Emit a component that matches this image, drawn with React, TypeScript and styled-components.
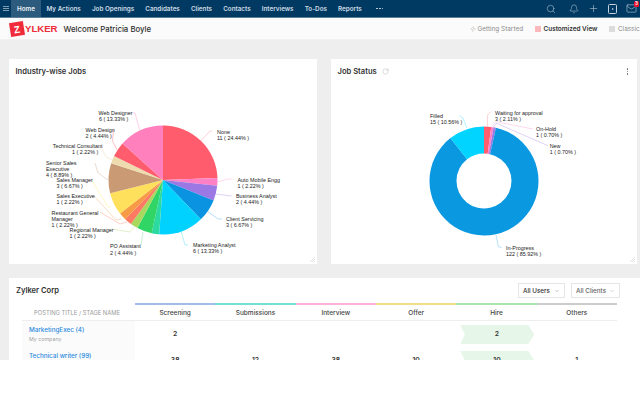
import React from "react";
import styled, { createGlobalStyle } from "styled-components";
import { Search, Bell, Plus, Mail, RotateCw, Zap, ChevronDown } from "lucide-react";

const Global = createGlobalStyle`
  html, body { margin: 0; padding: 0; background: #fff; }
  body { font-family: "Inter", "Liberation Sans", sans-serif; color: #333; }
`;

const Page = styled.div`
  width: 640px; height: 360px; overflow: hidden; background: #eeeeee;
  display: flex; flex-direction: column;
`;
const Nav = styled.nav`
  height: 18px; flex: none; background: #003a62; display: flex; align-items: stretch;
  border-bottom: 0.5px solid #5d7f98; box-sizing: border-box;
`;
const Burger = styled.div`
  width: 11px; flex: none; display: flex; flex-direction: column; justify-content: center; align-items: center; gap: 1.2px;
  & > i { display: block; width: 6px; height: 1px; background: #7f9db3; }
`;
const NavItem = styled.div<{ $active?: boolean }>`
  display: flex; align-items: center; padding: 0 ${p => (p.$active ? "6px" : "5.55px")};
  font-size: 6.3px; font-weight: 600; color: ${p => (p.$active ? "#eef3f6" : "#cfdbe4")};
  background: ${p => (p.$active ? "#2c5b7d" : "transparent")}; white-space: nowrap;
`;
const NavDots = styled.div`
  margin-left: 9px; display: flex; align-items: center; gap: 1px;
  & > i { display: block; width: 1.6px; height: 1.6px; border-radius: 50%; background: #cfdbe4; }
`;
const NavIcons = styled.div`
  margin-left: auto; display: flex; align-items: center; color: #c3d2dd; gap: 9px; padding-right: 3px;
  & > :first-child { margin-right: 4px; }
`;
const IconWrap = styled.span`
  position: relative; display: flex; align-items: center;
`;
const Badge = styled.span`
  position: absolute; top: -2.5px; right: -2px; width: 5px; height: 6px; border-radius: 1.5px; background: #e8112d; color: #fff;
  font-size: 4.5px; font-weight: 700; line-height: 6px; text-align: center;
`;
const PlayBox = styled.span`
  width: 9px; height: 10px; box-sizing: border-box; border: 1px solid #c3d2dd; border-radius: 1.5px; display: flex; align-items: center; justify-content: center;
  &::after { content: ""; border-left: 2px solid #c3d2dd; border-top: 1.5px solid transparent; border-bottom: 1.5px solid transparent; }
`;

const SubBar = styled.div`
  height: 22px; flex: none; background: #fbfbfb; display: flex; align-items: center; padding-left: 10px;
  border-bottom: 0.5px solid #f2f2f2; box-sizing: border-box; position: relative; white-space: nowrap;
`;
const LogoMark = styled.span`
  width: 14px; height: 14px; background: #f02b3a; color: #fff; font-family: "Liberation Sans", sans-serif; font-weight: 700; font-size: 10px;
  display: flex; align-items: center; justify-content: center; transform: rotate(-9deg); flex: none;
`;
const LogoText = styled.span`
  margin-left: 1px; color: #ee2b38; font-family: "Liberation Sans", sans-serif; font-weight: 700; font-size: 9.6px;
`;
const Welcome = styled.span`
  margin-left: 6px; font-size: 7.8px; font-weight: 500; color: #2f2f2f;
`;
const Views = styled.div`
  margin-left: auto; display: flex; align-items: center; font-size: 6.4px; width: 170px; flex: none; overflow: hidden;
  & > svg { flex: none; margin-right: -1px; }
`;
const ViewLabel = styled.span<{ $strong?: boolean }>`
  color: ${p => (p.$strong ? "#333" : "#8d8d8d")}; font-weight: ${p => (p.$strong ? 600 : 400)};
  margin-right: 12px; margin-left: 2.5px; flex: none;
`;
const Swatch = styled.span<{ $c: string }>`
  width: 6px; height: 6px; background: ${p => p.$c}; flex: none;
`;

const Charts = styled.div`
  display: flex; gap: 14px; padding: 19px 0 0 9px; height: 224px; box-sizing: border-box; flex: none; width: 640px;
`;
const Card = styled.section<{ $w: number }>`
  width: ${p => p.$w}px; height: 205px; background: #fff; position: relative; display: flex; flex-direction: column; flex: none;
`;
const CardHead = styled.header`
  height: 22px; flex: none; display: flex; align-items: center; padding: 3px 7px 0 6.5px; box-sizing: border-box;
  font-size: 7.6px; font-weight: 600; color: #333; gap: 5px;
`;
const Kebab = styled.div`
  margin-left: auto; margin-right: 2px; display: flex; flex-direction: column; gap: 1px;
  & > i { display: block; width: 1.5px; height: 1.5px; background: #666; border-radius: 50%; }
`;
const ChartSvg = styled.svg`
  display: block; flex: none;
  & text { font-family: "Liberation Sans", sans-serif; font-size: 5.4px; fill: #222; }
`;
const Grip = styled.svg`
  position: absolute; right: 1px; bottom: 1px;
`;

const Bottom = styled.section`
  margin: 14px 0 0 9px; background: #fff; flex: 1; position: relative; padding: 0 0 0 7px; min-height: 0;
`;
const BottomHead = styled.header`
  display: flex; align-items: center; height: 25px; padding-right: 20px;
`;
const BottomTitle = styled.h2`
  margin: 0; font-size: 7.6px; font-weight: 600; color: #333;
`;
const Filter = styled.div<{ $w: number; $muted?: boolean }>`
  width: ${p => p.$w}px; height: 15px; box-sizing: border-box; border: 1px solid #e6e6e6; display: flex; align-items: center; justify-content: space-between;
  padding: 0 4px; font-size: 6.3px; font-weight: 500; color: ${p => (p.$muted ? "#666" : "#333")}; margin-left: 6px; white-space: nowrap;
  &:first-of-type { margin-left: auto; }
`;
const Table = styled.div`
  display: grid; grid-template-columns: 113px repeat(6, 80.34px); margin-left: 6px; width: 595px;
`;
const HeadLeft = styled.div`
  height: 18px; box-sizing: border-box; display: flex; align-items: center; justify-content: center; padding-right: 3px; border-bottom: 1px solid #eeeeee;
  font-size: 5.8px; color: #9a9a9a; border-top: 2px solid transparent; white-space: nowrap;
`;
const HeadCell = styled.div<{ $c: string }>`
  height: 18px; box-sizing: border-box; display: flex; align-items: center; justify-content: center; border-top: 2px solid ${p => p.$c}; border-bottom: 1px solid #eeeeee;
  font-size: 6.5px; font-weight: 500; color: #444;
`;
const RowLeft = styled.div`
  background: #fbfbfb; height: 26px; padding: 5px 0 0 7px; box-sizing: border-box; white-space: nowrap;
`;
const JobLink = styled.div`
  font-size: 6.3px; font-weight: 500; color: #2b8ae0; line-height: 9px;
`;
const Company = styled.div`
  font-size: 5.3px; color: #a2a2a2; line-height: 8px;
`;
const Cell = styled.div`
  height: 26px; display: flex; align-items: flex-start; justify-content: center; padding-top: 4px; box-sizing: border-box;
  font-size: 6.8px; font-weight: 600; color: #333; line-height: 18px;
`;
const HireCell = styled(Cell)`
  position: relative; padding-left: 1px;
  &::before {
    content: ""; position: absolute; left: 4px; top: 4px; width: 74px; height: 19px; background: #e6f7e9;
    clip-path: polygon(0 0, 92% 0, 100% 50%, 92% 100%, 0 100%, 6% 50%);
  }
  & > span { position: relative; }
`;

type Slice = { v: number; c: string };
function polar(cx: number, cy: number, r: number, a: number): [number, number] {
  const t = (a - 90) * Math.PI / 180;
  return [cx + r * Math.cos(t), cy + r * Math.sin(t)];
}
function arcPath(cx: number, cy: number, R: number, r: number, a0: number, a1: number) {
  const large = a1 - a0 > 180 ? 1 : 0;
  const [x0, y0] = polar(cx, cy, R, a0);
  const [x1, y1] = polar(cx, cy, R, a1);
  if (r === 0) return `M${cx} ${cy}L${x0} ${y0}A${R} ${R} 0 ${large} 1 ${x1} ${y1}Z`;
  const [x2, y2] = polar(cx, cy, r, a1);
  const [x3, y3] = polar(cx, cy, r, a0);
  return `M${x0} ${y0}A${R} ${R} 0 ${large} 1 ${x1} ${y1}L${x2} ${y2}A${r} ${r} 0 ${large} 0 ${x3} ${y3}Z`;
}
const Slices = ({ data, cx, cy, R, r }: { data: Slice[]; cx: number; cy: number; R: number; r: number }) => {
  const total = data.reduce((s, d) => s + d.v, 0);
  let a = 0;
  return (
    <>
      {data.map((d, i) => {
        const a0 = a;
        a += (d.v / total) * 360;
        return <path key={i} d={arcPath(cx, cy, R, r, a0, a)} fill={d.c} />;
      })}
    </>
  );
};
type Label = { x: number; y: number; t: string };
const Labels = ({ items }: { items: Label[] }) => (
  <>{items.map((l, i) => <text key={i} x={l.x} y={l.y}>{l.t}</text>)}</>
);
type Lead = { d: string; c: string };
const Leads = ({ items }: { items: Lead[] }) => (
  <>{items.map((l, i) => <path key={i} d={l.d} stroke={l.c} strokeWidth={0.6} fill="none" />)}</>
);

const pie: Slice[] = [
  { v: 11, c: "#ff5c6e" }, { v: 1, c: "#ff80c4" }, { v: 2, c: "#9b78e4" }, { v: 3, c: "#0a93e0" },
  { v: 6, c: "#00d2ff" }, { v: 1, c: "#2cd9a0" }, { v: 2, c: "#30d565" }, { v: 1, c: "#a8d85e" },
  { v: 1, c: "#ff7a62" }, { v: 1, c: "#f79a45" }, { v: 3, c: "#ffe05c" }, { v: 4, c: "#c99a74" },
  { v: 1, c: "#eedcae" }, { v: 2, c: "#ff5c6e" }, { v: 6, c: "#ff80bd" },
];
const pieLabels: Label[] = [
  { x: 98.5, y: 115, t: "Web Designer" }, { x: 99, y: 121, t: "6 ( 13.33% )" },
  { x: 85.5, y: 131.7, t: "Web Design" }, { x: 85.5, y: 137.7, t: "2 ( 4.44% )" },
  { x: 52.7, y: 148.3, t: "Technical Consultant" }, { x: 72, y: 154.3, t: "1 ( 2.22% )" },
  { x: 46, y: 165, t: "Senior Sales" }, { x: 46, y: 171, t: "Executive" }, { x: 46, y: 177, t: "4 ( 8.89% )" },
  { x: 56.5, y: 181.7, t: "Sales Manager" }, { x: 56.5, y: 187.7, t: "3 ( 6.67% )" },
  { x: 56.5, y: 198.3, t: "Sales Executive" }, { x: 56.5, y: 204.3, t: "1 ( 2.22% )" },
  { x: 51.5, y: 215, t: "Restaurant General" }, { x: 51.5, y: 221, t: "Manager" }, { x: 51.5, y: 227, t: "1 ( 2.22% )" },
  { x: 69.5, y: 231.7, t: "Regional Manager" }, { x: 69.5, y: 237.7, t: "1 ( 2.22% )" },
  { x: 110, y: 248.3, t: "PO Assistant" }, { x: 110, y: 254.5, t: "2 ( 4.44% )" },
  { x: 217, y: 134, t: "None" }, { x: 217, y: 140, t: "11 ( 24.44% )" },
  { x: 237.5, y: 181.7, t: "Auto Mobile Engg" }, { x: 237.5, y: 187.7, t: "1 ( 2.22% )" },
  { x: 236, y: 198.3, t: "Business Analyst" }, { x: 236, y: 204.3, t: "2 ( 4.44% )" },
  { x: 226, y: 221, t: "Client Servicing" }, { x: 226, y: 227, t: "3 ( 6.67% )" },
  { x: 193, y: 246.7, t: "Marketing Analyst" }, { x: 193, y: 252.7, t: "6 ( 13.33% )" },
];
const pieLeads: Lead[] = [
  { d: "M133 113L135 113L140 131", c: "#ffb3d9" },
  { d: "M113.5 129L112.5 141L117 150", c: "#ff9aa5" },
  { d: "M101 147L106 157L112.7 160", c: "#f0e3c4" },
  { d: "M95 163L98 173L108 180", c: "#e0c4ae" },
  { d: "M91.7 180L107.7 206.7L111 206.7", c: "#fff0a0" },
  { d: "M94 196L116 220L122 219", c: "#fbc594" },
  { d: "M100 212L120 224L127 222", c: "#ffb0a0" },
  { d: "M111.7 229L130 232L134 227", c: "#cfe8a6" },
  { d: "M140 245L141 245L143 232", c: "#a0eab8" },
  { d: "M212 131L210 131L200.7 141", c: "#ffb0b8" },
  { d: "M232.7 179L228 179L216.7 182", c: "#ffc0e0" },
  { d: "M231.7 196L215.7 194", c: "#c8b4f0" },
  { d: "M221.7 219L218 219L208 211.7", c: "#86c8f0" },
  { d: "M188 245L185 245L181 231", c: "#80e8ff" },
];
const donut: Slice[] = [
  { v: 3, c: "#ff5c6e" }, { v: 1, c: "#ff80c4" }, { v: 1, c: "#9b78e4" }, { v: 122, c: "#0a98e0" }, { v: 15, c: "#00d4ff" },
];
const donutLabels: Label[] = [
  { x: 430, y: 118, t: "Filled" }, { x: 430, y: 124, t: "15 ( 10.56% )" },
  { x: 495, y: 114.7, t: "Waiting for approval" }, { x: 495, y: 120.7, t: "3 ( 2.11% )" },
  { x: 536, y: 131, t: "On-Hold" }, { x: 536, y: 137, t: "1 ( 0.70% )" },
  { x: 549.7, y: 147.7, t: "New" }, { x: 549.7, y: 153.7, t: "1 ( 0.70% )" },
  { x: 506, y: 249.7, t: "In-Progress" }, { x: 506, y: 255.7, t: "122 ( 85.92% )" },
];
const donutLeads: Lead[] = [
  { d: "M459.3 115.7L463 118L466.7 128", c: "#80e8ff" },
  { d: "M491 111.7L487.7 115L487.3 126.7", c: "#ffb0b8" },
  { d: "M533 129L496 121.7L491.7 126.7", c: "#ffc0e0" },
  { d: "M548 145.7L496.7 123.3L493.3 127.3", c: "#c8b4f0" },
  { d: "M501.7 247.7L498.3 246.7L496 235", c: "#86d0f4" },
];

const GripIcon = () => (
  <Grip width="7" height="7" viewBox="0 0 7 7">
    <path d="M1 6L6 1M3 6L6 3M5 6L6 5" stroke="#cfcfcf" strokeWidth="0.6" />
  </Grip>
);

const navItems = ["My Actions", "Job Openings", "Candidates", "Clients", "Contacts", "Interviews", "To-Dos", "Reports"];
const stages = [
  ["Screening", "#a3bde8"], ["Submissions", "#74e0d2"], ["Interview", "#ffb3da"],
  ["Offer", "#f2de84"], ["Hire", "#a9e6ab"], ["Others", "#cccccc"],
];

export default function App() {
  return (
    <Page>
      <Global />
      <Nav>
        <Burger><i /><i /><i /></Burger>
        <NavItem $active>Home</NavItem>
        {navItems.map(n => <NavItem key={n}>{n}</NavItem>)}
        <NavDots><i /><i /><i /></NavDots>
        <NavIcons>
          <IconWrap><Search size={10} strokeWidth={1.2} /></IconWrap>
          <IconWrap><Bell size={10} strokeWidth={1.2} /></IconWrap>
          <IconWrap><Plus size={11} strokeWidth={1.2} /></IconWrap>
          <IconWrap><PlayBox /></IconWrap>
          <IconWrap><Mail size={11} strokeWidth={1.2} /><Badge>3</Badge></IconWrap>
        </NavIcons>
      </Nav>
      <SubBar>
        <LogoMark>Z</LogoMark>
        <LogoText>YLKER</LogoText>
        <Welcome>Welcome Patricia Boyle</Welcome>
        <Views>
          <Zap size={6} strokeWidth={1} color="#888" />
          <ViewLabel>Getting Started</ViewLabel>
          <Swatch $c="#f9b9bc" />
          <ViewLabel $strong>Customized View</ViewLabel>
          <Swatch $c="#dcdcdc" />
          <ViewLabel>Classic View</ViewLabel>
        </Views>
      </SubBar>
      <Charts>
        <Card $w={308}>
          <CardHead>Industry-wise Jobs</CardHead>
          <ChartSvg width="308" height="183" viewBox="9 81 308 183">
            <Leads items={pieLeads} />
            <Slices data={pie} cx={163} cy={180} R={54.5} r={0} />
            <Labels items={pieLabels} />
          </ChartSvg>
          <GripIcon />
        </Card>
        <Card $w={306}>
          <CardHead>
            Job Status <RotateCw size={7} strokeWidth={1} color="#888" />
            <Kebab><i /><i /><i /></Kebab>
          </CardHead>
          <ChartSvg width="306" height="183" viewBox="331 81 306 183">
            <Leads items={donutLeads} />
            <Slices data={donut} cx={484} cy={181} R={54.5} r={27.5} />
            <Labels items={donutLabels} />
          </ChartSvg>
          <GripIcon />
        </Card>
      </Charts>
      <Bottom>
        <BottomHead>
          <BottomTitle>Zylker Corp</BottomTitle>
          <Filter $w={47}>All Users <ChevronDown size={6} strokeWidth={1} /></Filter>
          <Filter $w={49} $muted>All Clients <ChevronDown size={6} strokeWidth={1} /></Filter>
        </BottomHead>
        <Table>
          <HeadLeft>POSTING TITLE / STAGE NAME</HeadLeft>
          {stages.map(([n, c]) => <HeadCell key={n} $c={c}>{n}</HeadCell>)}
          <RowLeft>
            <JobLink>MarketingExec (4)</JobLink>
            <Company>My company</Company>
          </RowLeft>
          <Cell>2</Cell><Cell /><Cell /><Cell />
          <HireCell><span>2</span></HireCell><Cell />
          <RowLeft><JobLink>Technical writer (99)</JobLink></RowLeft>
          <Cell>38</Cell><Cell>12</Cell><Cell>38</Cell><Cell>10</Cell>
          <HireCell><span>10</span></HireCell><Cell>1</Cell>
        </Table>
      </Bottom>
    </Page>
  );
}
